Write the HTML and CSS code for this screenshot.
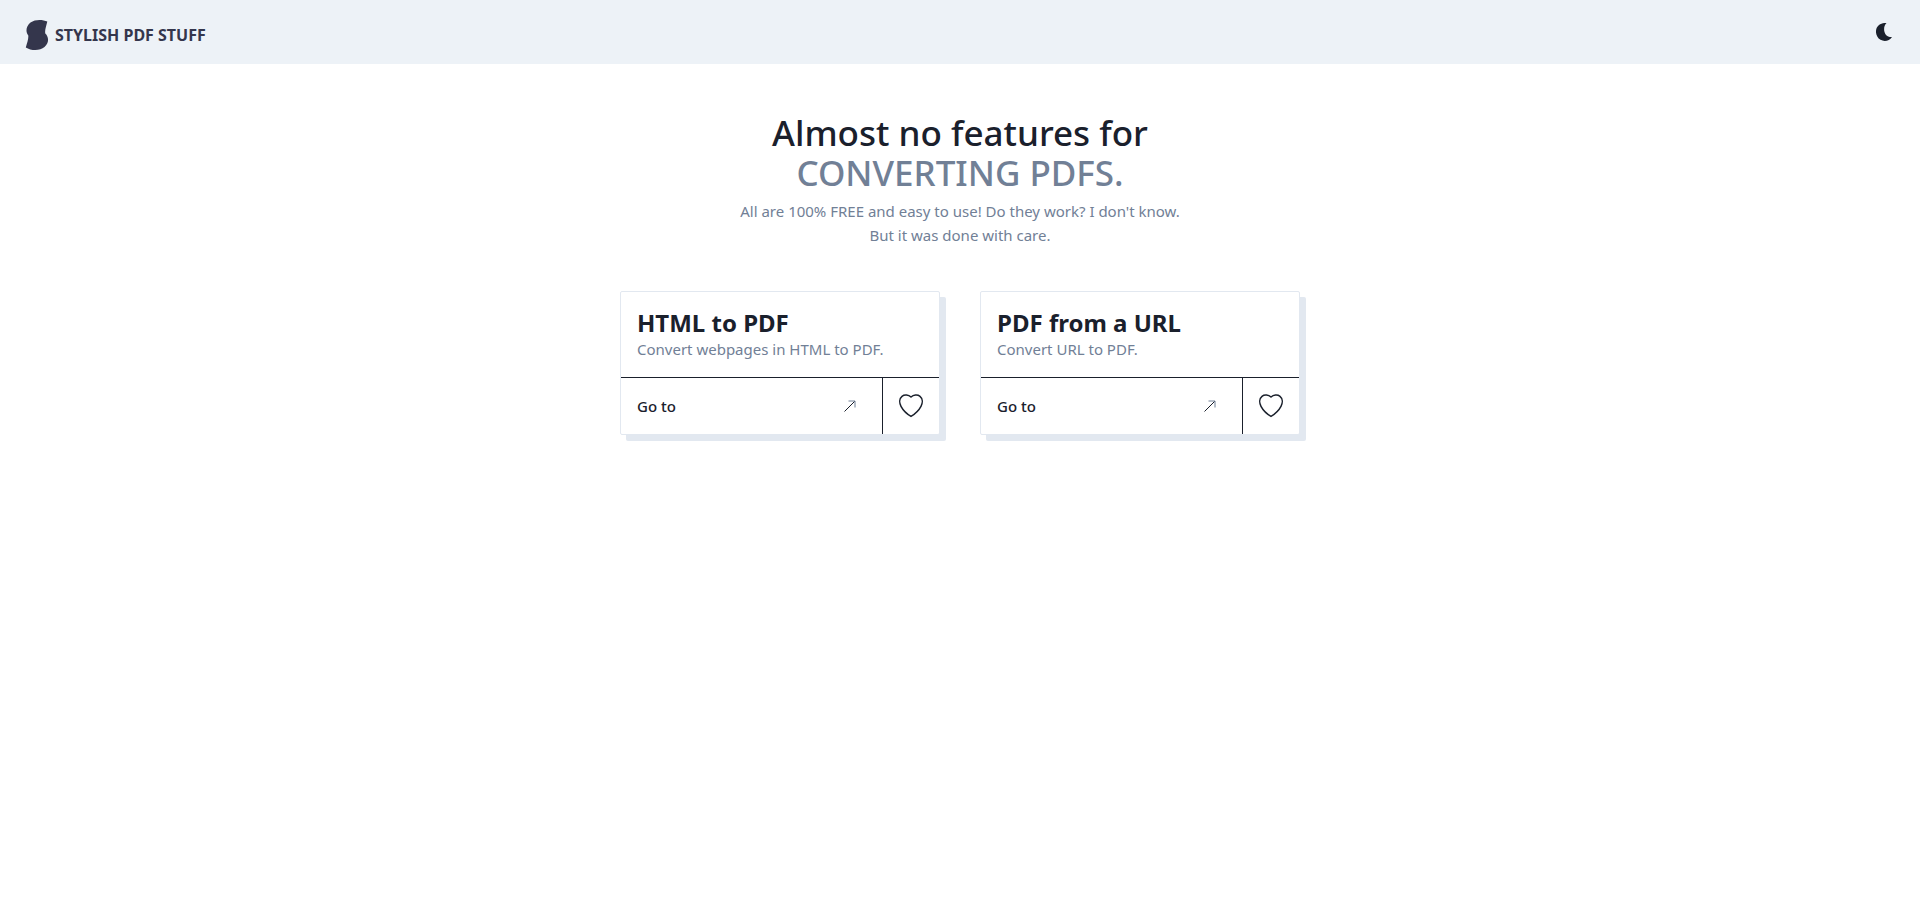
FILE: index.html
```html
<!DOCTYPE html>
<html lang="en">
<head>
<meta charset="utf-8">
<meta name="viewport" content="width=device-width, initial-scale=1">
<title>Stylish PDF Stuff</title>
<link rel="stylesheet" href="styles.css">
</head>
<body>
<header class="navbar">
  <a class="brand" href="#">
    <svg class="brand-mark" viewBox="0 0 24 32" aria-hidden="true"><path d="M22.3 2.4C18 .6 10.500-.2 5.500 3.500C1 7 .3 13 3.300 16.500C3.600 20 2 24 .8 28.400C6 31.800 15 32 19.500 28C24.200 24 24 18 20.300 14.500C19.600 11 21.300 7 22.300 2.400Z"/></svg>
    <span class="brand-name">STYLISH PDF STUFF</span>
  </a>
  <button class="theme-toggle" type="button" aria-label="Switch to dark mode">
    <svg class="moon" viewBox="0 0 16 18" aria-hidden="true"><path d="M10.500 0C6.500 3.500 7 14.300 16 14C13.500 17.800 8.500 19 4.500 16.800C-1 13.500-1.500 5.500 3 2C5 .5 8 -.3 10.500 0Z"/></svg>
  </button>
</header>
<main class="page">
  <section class="hero">
    <h1 class="hero-title"><span class="hero-line">Almost no features for</span> <span class="hero-line hero-accent">CONVERTING PDFS.</span></h1>
    <p class="hero-text">All are 100% FREE and easy to use! Do they work? I don't know.<br>But it was done with care.</p>
  </section>
  <section class="cards">
    <article class="card">
      <div class="card-body">
        <h2 class="card-title">HTML to PDF</h2>
        <p class="card-text">Convert webpages in HTML to PDF.</p>
      </div>
      <div class="card-footer">
        <a class="card-link" href="#">Go to
          <svg class="arrow" viewBox="0 0 12 12" aria-hidden="true"><path d="M.5 11.500L11 1"/><path class="arrow-head" d="M4.500 1H11V7.500"/></svg>
        </a>
        <button class="card-like" type="button" aria-label="Like HTML to PDF">
          <svg class="heart" viewBox="0 0 24 24" aria-hidden="true"><path d="M12 3C9.500.8 5.500.4 3 2.300C.2 4.500.2 8.800 2 12.300C4 16 8 20 12 22.300C16 20 20 16 22 12.300C23.800 8.800 23.800 4.500 21 2.300C18.500.4 14.500.8 12 3Z"/></svg>
        </button>
      </div>
    </article>
    <article class="card">
      <div class="card-body">
        <h2 class="card-title">PDF from a URL</h2>
        <p class="card-text">Convert URL to PDF.</p>
      </div>
      <div class="card-footer">
        <a class="card-link" href="#">Go to
          <svg class="arrow" viewBox="0 0 12 12" aria-hidden="true"><path d="M.5 11.500L11 1"/><path class="arrow-head" d="M4.500 1H11V7.500"/></svg>
        </a>
        <button class="card-like" type="button" aria-label="Like PDF from a URL">
          <svg class="heart" viewBox="0 0 24 24" aria-hidden="true"><path d="M12 3C9.500.8 5.500.4 3 2.300C.2 4.500.2 8.800 2 12.300C4 16 8 20 12 22.300C16 20 20 16 22 12.300C23.800 8.800 23.800 4.500 21 2.300C18.500.4 14.500.8 12 3Z"/></svg>
        </button>
      </div>
    </article>
  </section>
</main>
</body>
</html>
```
FILE: styles.css
```css
* {
  box-sizing: border-box;
}

body {
  margin: 0;
  background: #fff;
  color: #1a202c;
  font-family: "Segoe UI", "Noto Sans", "Open Sans", sans-serif;
  font-size: 15px;
  line-height: 24px;
}

h1, h2, p {
  margin: 0;
}

a {
  color: inherit;
  text-decoration: none;
}

button {
  border: 0;
  padding: 0;
  background: none;
  color: inherit;
  cursor: pointer;
}

svg {
  display: block;
}

.navbar {
  display: flex;
  align-items: center;
  justify-content: space-between;
  height: 64px;
  padding: 0 16px 0 25px;
  background: #edf2f7;
}

.brand {
  display: flex;
  align-items: center;
  gap: 6px;
  padding-top: 6px;
  color: #34364c;
}

.brand-mark {
  width: 24px;
  height: 32px;
  fill: currentColor;
}

.brand-name {
  font-size: 16px;
  font-weight: 700;
}

.theme-toggle {
  display: grid;
  place-items: center;
  width: 40px;
  height: 64px;
}

.moon {
  width: 16px;
  height: 18px;
  fill: currentColor;
}

.page {
  padding: 49px 16px 48px;
}

.hero {
  text-align: center;
}

.hero-title {
  font-size: 35px;
  font-weight: 500;
  line-height: 40px;
}

.hero-line {
  display: block;
}

.hero-accent,
.hero-text,
.card-text {
  color: #718096;
}

.hero-text {
  padding-top: 6px;
}

.cards {
  display: flex;
  flex-wrap: wrap;
  justify-content: center;
  gap: 40px;
  margin-top: 44px;
}

.card {
  width: 320px;
  border: 1px solid #e2e8f0;
  border-radius: 2px;
  background: #fff;
  box-shadow: 6px 6px 0 #e2e8f0;
}

.card-body {
  padding: 16px;
}

.card-title {
  font-size: 24px;
  font-weight: 700;
  line-height: 29px;
}

.card-footer {
  display: flex;
  border-top: 1px solid #1a202c;
}

.card-link {
  display: flex;
  flex: 1;
  align-items: center;
  justify-content: space-between;
  padding: 16px 26px 16px 16px;
  font-weight: 500;
}

.card-like {
  display: grid;
  place-items: center;
  width: 57px;
  border-left: 1px solid #1a202c;
}

.arrow {
  width: 12px;
  height: 12px;
  fill: none;
  stroke: currentColor;
}

.arrow-head {
  stroke: #718096;
}

.heart {
  width: 24px;
  height: 24px;
  fill: none;
  stroke: currentColor;
  stroke-width: 1.5;
}
```
